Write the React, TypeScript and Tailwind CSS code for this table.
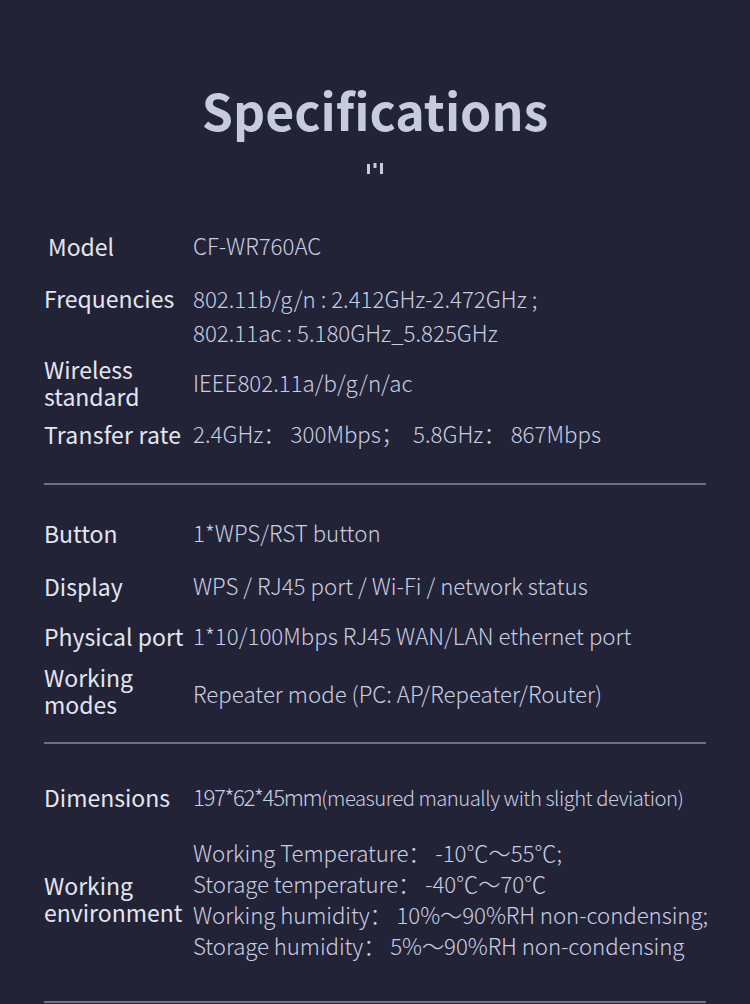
const font = { fontFamily: '"Noto Sans CJK SC", "Noto Sans", sans-serif' };

const Divider = ({ className = "" }: { className?: string }) => (
  <div className={`h-[2px] bg-[#6e7186] ${className}`} />
);

const label = "w-[149px] shrink-0 text-[23px] text-[#e4e6ef]";

export default function App() {
  return (
    <div
      style={font}
      className="w-[750px] h-[1004px] overflow-hidden bg-[#222337] text-[#c9cde0]"
    >
      <div className="pt-[76px] flex flex-col items-center">
        <h1 className="text-[50px] leading-[66px] font-bold text-[#c6cbe0]">
          Specifications
        </h1>
        <svg width="18" height="14" viewBox="0 0 18 14" className="mt-[20px]">
          <rect x="1" y="2" width="3" height="10" fill="#c6cbe0" />
          <rect x="7.5" y="1" width="3" height="5" fill="#c6cbe0" />
          <rect x="14" y="1" width="3" height="11" fill="#c6cbe0" />
        </svg>
      </div>

      <div className="px-[44px] mt-[52px] text-[22.3px] whitespace-nowrap">
        {/* section 1 */}
        <div className="flex items-center h-[36px]">
          <div className={`${label} pl-[4px]`}>Model</div>
          <div className="font-light">CF-WR760AC</div>
        </div>
        <div className="flex items-start mt-[17px] leading-[34px]">
          <div className={label}>Frequencies</div>
          <div className="font-light">
            <div>802.11b/g/n : 2.412GHz-2.472GHz ;</div>
            <div>802.11ac : 5.180GHz_5.825GHz</div>
          </div>
        </div>
        <div className="flex items-center mt-[7px]">
          <div className={`${label} leading-[27px]`}>
            <div>Wireless</div>
            <div>standard</div>
          </div>
          <div className="font-light">IEEE802.11a/b/g/n/ac</div>
        </div>
        <div className="flex items-center mt-[7px] h-[34px] whitespace-pre">
          <div className={`${label} tracking-[0.2px]`}>Transfer rate</div>
          <div className="font-light">2.4GHz： 300Mbps；  5.8GHz： 867Mbps</div>
        </div>
        <Divider className="mt-[32px]" />

        {/* section 2 */}
        <div className="flex items-center mt-[31px] h-[34px]">
          <div className={label}>Button</div>
          <div className="font-light">1*WPS/RST button</div>
        </div>
        <div className="flex items-center mt-[19px] h-[34px]">
          <div className={`${label} w-[148px]`}>Display</div>
          <div className="font-light">WPS / RJ45 port / Wi-Fi / network status</div>
        </div>
        <div className="flex items-center mt-[16px] h-[34px]">
          <div className={label}>Physical port</div>
          <div className="font-light">1*10/100Mbps RJ45 WAN/LAN ethernet port</div>
        </div>
        <div className="flex items-center mt-[11px]">
          <div className={`${label} leading-[27px]`}>
            <div>Working</div>
            <div>modes</div>
          </div>
          <div className="font-light pt-[6px]">
            Repeater mode (PC: AP/Repeater/Router)
          </div>
        </div>
        <Divider className="mt-[24px]" />

        {/* section 3 */}
        <div className="flex items-center mt-[36px] h-[34px]">
          <div className={label}>Dimensions</div>
          <div className="font-light">
            <span className="tracking-[-1.4px]">197*62*45mm</span>
            <span className="text-[20.3px] tracking-[-0.5px]">
              (measured manually with slight deviation)
            </span>
          </div>
        </div>
        <div className="flex items-center mt-[23px]">
          <div className={`${label} leading-[27px]`}>
            <div>Working</div>
            <div>environment</div>
          </div>
          <div className="font-light leading-[31px] tracking-[-0.1px]">
            <div>Working Temperature： -10℃～55℃;</div>
            <div>Storage temperature： -40℃～70℃</div>
            <div>Working humidity： 10%～90%RH non-condensing;</div>
            <div>Storage humidity： 5%～90%RH non-condensing</div>
          </div>
        </div>
        <Divider className="mt-[40px]" />
      </div>
    </div>
  );
}
